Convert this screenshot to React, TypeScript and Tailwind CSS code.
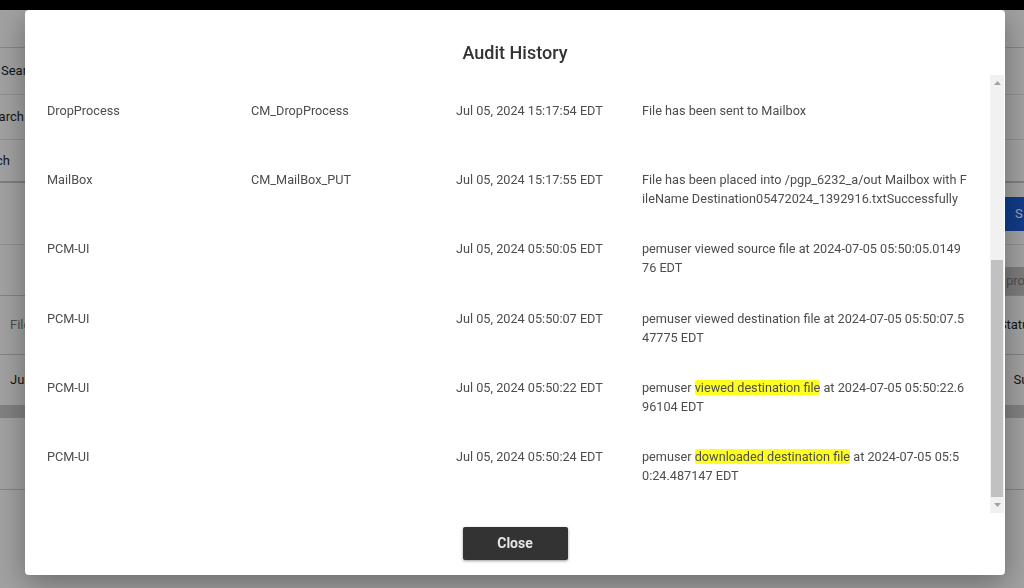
import React from "react";

type Row = {
  source: string;
  code: string;
  time: string;
  lines: React.ReactNode[];
};

const HL = ({ children }: { children: React.ReactNode }) => (
  <span className="bg-[#ffff1f] rounded-[2px]">{children}</span>
);

const rows: Row[] = [
  {
    source: "DropProcess",
    code: "CM_DropProcess",
    time: "Jul 05, 2024 15:17:54 EDT",
    lines: ["File has been sent to Mailbox"],
  },
  {
    source: "MailBox",
    code: "CM_MailBox_PUT",
    time: "Jul 05, 2024 15:17:55 EDT",
    lines: [
      "File has been placed into /pgp_6232_a/out Mailbox with F",
      "ileName Destination05472024_1392916.txtSuccessfully",
    ],
  },
  {
    source: "PCM-UI",
    code: "",
    time: "Jul 05, 2024 05:50:05 EDT",
    lines: ["pemuser viewed source file at 2024-07-05 05:50:05.0149", "76 EDT"],
  },
  {
    source: "PCM-UI",
    code: "",
    time: "Jul 05, 2024 05:50:07 EDT",
    lines: ["pemuser viewed destination file at 2024-07-05 05:50:07.5", "47775 EDT"],
  },
  {
    source: "PCM-UI",
    code: "",
    time: "Jul 05, 2024 05:50:22 EDT",
    lines: [
      <>
        pemuser <HL>viewed destination file</HL> at 2024-07-05 05:50:22.6
      </>,
      "96104 EDT",
    ],
  },
  {
    source: "PCM-UI",
    code: "",
    time: "Jul 05, 2024 05:50:24 EDT",
    lines: [
      <>
        pemuser <HL>downloaded destination file</HL> at 2024-07-05 05:5
      </>,
      "0:24.487147 EDT",
    ],
  },
];

function Background() {
  return (
    <div className="flex flex-col text-[13px] text-[#1f1f1f]">
      <div className="h-[10px] bg-black" />
      <div className="h-[38px] border-b border-[#d6d6d6] bg-white" />
      <div className="flex h-[47px] items-center justify-between border-b border-[#e2e2e2]">
        <span className="ml-[1px]">Search</span>
      </div>
      <div className="flex h-[45px] items-center justify-between border-b border-[#e2e2e2]">
        <span className="ml-[-16px]">Search</span>
      </div>
      <div className="flex h-[43px] items-center justify-between border-b-2 border-[#c8c8c8]">
        <span className="ml-[-30px]">Search</span>
      </div>
      <div className="flex h-[62px] items-center justify-end border-b border-[#e2e2e2]">
        <div className="flex h-[34px] w-[30px] items-center bg-[#1a5ed8] pl-[21px] text-white">S</div>
      </div>
      <div className="flex h-[50px] items-end justify-end">
        <div className="flex h-[28px] w-[25px] items-center overflow-hidden bg-[#c4c4c4] text-[#7e7e7e]">
          <span className="ml-[7px]">pro</span>
        </div>
      </div>
      <div className="flex h-[60px] items-center justify-between border-t border-[#cfcfcf] border-b">
        <span className="ml-[10px] text-[#7a7a7a]">File</span>
        <span className="mr-[-12px]">Status</span>
      </div>
      <div className="flex h-[50px] items-center justify-between">
        <span className="ml-[10px]">Jul</span>
        <span className="mr-[-18px]">Succ</span>
      </div>
      <div className="h-[13px] bg-[#cccccc]" />
      <div className="h-[72px] border-b border-[#cfcfcf]" />
      <div className="flex-1" />
    </div>
  );
}

export default function App() {
  return (
    <div className="relative h-[588px] w-[1024px] overflow-hidden bg-white font-['Roboto','Liberation_Sans',sans-serif]">
      <Background />
      <div className="fixed inset-0 bg-black/[0.37]" />
      <div className="fixed left-[25px] top-[10px] flex h-[565px] w-[980px] flex-col rounded-[4px] bg-white shadow-[0_8px_30px_rgba(0,0,0,0.35)]">
        <div className="flex h-[65px] items-center justify-center pt-[20px] text-[18px] font-medium text-[#333333]">
          Audit History
        </div>
        <div className="flex h-[438px]">
          <div className="flex-1 overflow-hidden pl-[22px] pt-[26px] text-[12.7px] leading-[19px] text-[#4d4d4d]">
            {rows.map((r, i) => (
              <div key={i} className="flex h-[69.2px] items-start">
                <div className="w-[204px]">{r.source}</div>
                <div className="w-[205px]">{r.code}</div>
                <div className="w-[186px]">{r.time}</div>
                <div className="flex flex-col whitespace-nowrap">
                  {r.lines.map((l, j) => (
                    <span key={j}>{l}</span>
                  ))}
                </div>
              </div>
            ))}
          </div>
          <div className="mr-[1px] flex w-[14px] flex-col bg-[#f1f1f1]">
            <div className="flex h-[15px] items-center justify-center">
              <svg width="7" height="4" viewBox="0 0 7 4">
                <path d="M3.5 0 L7 4 L0 4 Z" fill="#a3a3a3" />
              </svg>
            </div>
            <div className="h-[170px]" />
            <div className="mx-[1px] flex-1 bg-[#c1c1c1]" />
            <div className="flex h-[16px] items-center justify-center">
              <svg width="7" height="4" viewBox="0 0 7 4">
                <path d="M0 0 L7 0 L3.5 4 Z" fill="#a3a3a3" />
              </svg>
            </div>
          </div>
        </div>
        <div className="flex flex-1 justify-center pt-[14px]">
          <button className="h-[33px] w-[105px] rounded-[2px] bg-[#333333] text-[14px] font-bold text-[#e6e6e6] shadow-[0_1px_3px_rgba(0,0,0,0.4)]">
            Close
          </button>
        </div>
      </div>
    </div>
  );
}
